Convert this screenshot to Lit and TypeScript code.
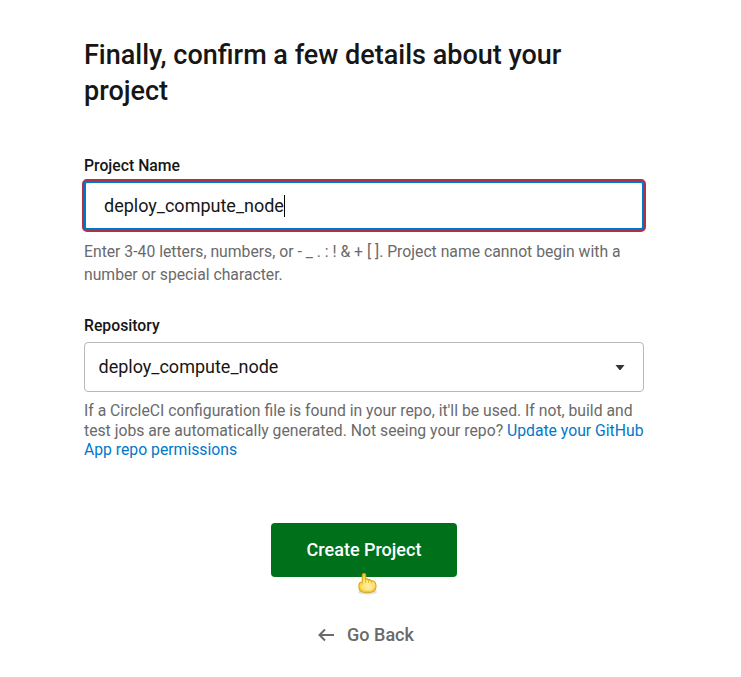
import { LitElement, html, css } from "lit";
import { customElement } from "lit/decorators.js";

@customElement("app-root")
class AppRoot extends LitElement {
  static styles = css`
    :host { display: block; height: 677px; background: #fff; color: #161616; font-family: Roboto, sans-serif; overflow: hidden; }
    * { box-sizing: border-box; }
    main { width: 560px; margin-left: 84px; padding-top: 37px; display: flex; flex-direction: column; }
    h1 { margin: 0; font-size: 27px; line-height: 36px; font-weight: 500; }
    label { font-size: 15.75px; line-height: 20px; font-weight: 500; }
    .first { margin-top: 47px; }
    .field { margin: 3px -2px 0; height: 53px; border: 2px solid #ad3147; border-radius: 5px; background: #0078ca; }
    .inner { height: 100%; border: 2px solid #0078ca; border-radius: 3px; background: #fff; padding-left: 18px; display: flex; align-items: center; font-size: 18px; }
    .caret { width: 1px; height: 22px; background: #000; }
    p { margin: 0; color: #6a6a6a; font-size: 15.74px; white-space: nowrap; }
    .hint { line-height: 23px; margin-top: 8px; }
    .second { margin-top: 30px; }
    .select { margin-top: 6px; height: 50px; border: 1px solid #b8b8b8; border-radius: 4px; padding: 0 18px 0 13.5px; display: flex; align-items: center; justify-content: space-between; font-size: 18px; }
    .select span { margin-top: -1px; }
    .select svg { display: block; }
    .note { line-height: 19.5px; margin-top: 9px; }
    a { color: #0078ca; }
    .create { position: relative; align-self: center; width: 186px; height: 54px; margin-top: 63px; background: #00701a; color: #fff; border: 0; border-radius: 4px; font: 500 18px Roboto, sans-serif; }
    .hand { position: absolute; left: 86px; top: 49px; }
    .back { align-self: center; margin: 46px 0 0 4px; display: flex; align-items: center; gap: 12px; height: 24px; color: #6a6a6a; font-size: 18px; font-weight: 500; }
  `;
  render() {
    return html`<main>
      <h1>Finally, confirm a few details about your<br>project</h1>
      <label class="first">Project Name</label>
      <div class="field"><div class="inner">deploy_compute_node<span class="caret"></span></div></div>
      <p class="hint">Enter 3-40 letters, numbers, or - _ . : ! &amp; + [ ]. Project name cannot begin with a<br>number or special character.</p>
      <label class="second">Repository</label>
      <div class="select"><span>deploy_compute_node</span><svg width="10" height="5" viewBox="0 0 10 5"><path d="M.5 0h9L5.5 5h-1z" fill="#333"/></svg></div>
      <p class="note">If a CircleCI configuration file is found in your repo, it'll be used. If not, build and<br>test jobs are automatically generated. Not seeing your repo? <a>Update your GitHub<br>App repo permissions</a></p>
      <button class="create">Create Project
        <svg class="hand" width="21" height="24" viewBox="0 0 21 24">
          <defs><radialGradient id="skin" cx=".55" cy=".65" r=".6"><stop offset="0" stop-color="#fff0a8"/><stop offset=".65" stop-color="#ffe06a"/><stop offset="1" stop-color="#f5cd35"/></radialGradient></defs>
          <ellipse cx="10.5" cy="20" rx="9.5" ry="2.5" fill="#000" opacity=".12"/>
          <path d="M5.3 3.2Q5.3 1.6 7 1.6T8.7 3.2V7.2Q10 6.3 11.3 7.7Q13 7.3 14.2 8.8Q16 8.5 17.2 9.7Q18.8 10.6 18.9 12.8V15.8Q18.3 20.5 10.5 20.8Q2.5 20.5 2 16.5V12.5Q2.3 10.2 5.3 9.7Z" fill="url(#skin)" stroke="#d5a419" stroke-width="1.1"/>
          <path d="M8.7 7.5V11M11.5 8V11M14.4 9v2.5M5.2 9.7v3M3.2 16.2q1 3 7.3 3.2t7-3.6" fill="none" stroke="#e1b221" stroke-width=".8"/>
        </svg>
      </button>
      <div class="back"><svg width="17" height="14" viewBox="0 0 17 14"><path d="M16 7H2M7 1.5 1.5 7 7 12.5" fill="none" stroke="#6a6a6a" stroke-width="2"/></svg>Go Back</div>
    </main>`;
  }
}
